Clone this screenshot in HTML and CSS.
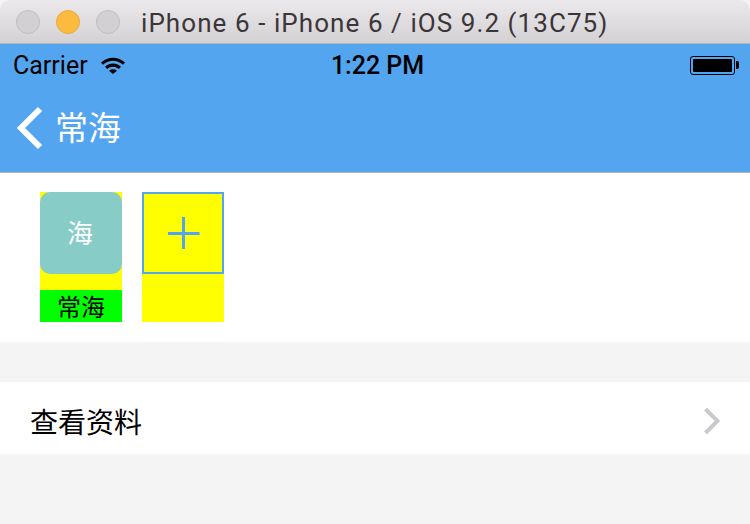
FILE: index.html
```html
<!DOCTYPE html>
<html lang="zh-CN">

<head>
    <meta charset="UTF-8">
    <title>iPhone 6 - iPhone 6 / iOS 9.2 (13C75)</title>
    <link rel="stylesheet" href="styles.css">
</head>

<body>
    <div class="titlebar">
        <div class="lights">
            <span class="light"></span>
            <span class="light light-min"></span>
            <span class="light"></span>
        </div>
        <span class="window-title">iPhone 6 - iPhone 6 / iOS 9.2 (13C75)</span>
    </div>

    <div class="header">
        <div class="status">
            <div class="status-left">
                <span>Carrier</span>
                <svg class="wifi" width="24" height="17" viewBox="0 0 24 17">
                    <path d="M0 5.500C7 -.8 17 -.8 24 5.500L22 7.700C16 2.500 8 2.500 2 7.700Z" fill="#000" />
                    <path d="M4 9.700C9 5.500 15 5.500 20 9.700L17.800 12C14 9 10 9 6.200 12Z" fill="#000" />
                    <path d="M8 13.700C10.500 11.800 13.500 11.800 16 13.700L12 17Z" fill="#000" />
                </svg>
            </div>
            <span class="clock">1:22 PM</span>
            <div class="status-right">
                <div class="battery"><span class="battery-fill"></span></div>
            </div>
        </div>
        <div class="nav">
            <svg class="back" width="28" height="44" viewBox="0 0 28 44">
                <path d="M24 3L5 22L24 41" fill="none" stroke="#fff" stroke-width="6" />
            </svg>
            <span class="nav-title">常海</span>
        </div>
    </div>

    <div class="members">
        <div class="member">
            <div class="avatar">海</div>
            <div class="member-name">常海</div>
        </div>
        <div class="member">
            <div class="add">
                <svg width="34" height="34" viewBox="0 0 34 34">
                    <path d="M2 17.500H33.500M17.500 1V33" fill="none" stroke="#53a5ef" stroke-width="3" />
                </svg>
            </div>
        </div>
    </div>

    <div class="row">
        <span>查看资料</span>
        <svg class="arrow" width="16" height="26" viewBox="0 0 16 26">
            <path d="M1.500 1L13.500 13L1.500 25" fill="none" stroke="#c8c8cd" stroke-width="4" />
        </svg>
    </div>
</body>

</html>
```

FILE: styles.css
```css
* {
    margin: 0;
    padding: 0;
    box-sizing: border-box;
}

body {
    height: 524px;
    overflow: hidden;
    background: #f4f4f4;
    font-family: 'Liberation Sans', 'Noto Sans CJK SC', sans-serif;
}

.titlebar {
    display: flex;
    align-items: center;
    height: 44px;
    padding-left: 16px;
    border-bottom: 1px solid #b4b2b4;
    border-radius: 10px 10px 0 0;
    background: linear-gradient(#ebe9eb, #d3d1d3);
}

.lights {
    display: flex;
    gap: 16px;
}

.light {
    width: 24px;
    height: 24px;
    border: 1px solid #c0bec0;
    border-radius: 50%;
    background: #d2d0d2;
}

.light-min {
    border-color: #e8a93a;
    background: #fcbb3f;
}

.window-title {
    margin-left: 21px;
    padding-top: 3px;
    font-family: Roboto, sans-serif;
    font-size: 26px;
    letter-spacing: 1.07px;
    color: #3c3538;
}

.header {
    height: 129px;
    border-bottom: 1px solid #b2b2b2;
    background: #53a5ef;
}

.status {
    display: flex;
    align-items: center;
    height: 40px;
    padding: 2px 15px 0 13px;
    color: #000;
}

.status-left {
    display: flex;
    flex: 1;
    align-items: center;
    gap: 13px;
    font-family: Roboto, sans-serif;
    font-size: 25px;
}

.status-right {
    display: flex;
    flex: 1;
    justify-content: flex-end;
}

.clock {
    margin-left: 7px;
    font-family: Roboto, sans-serif;
    font-size: 25px;
    font-weight: 500;
}

.battery {
    position: relative;
    width: 45px;
    height: 19px;
    padding: 2px;
    border: 1px solid #000;
    border-radius: 3px;
}

.battery::after {
    content: '';
    position: absolute;
    top: 4px;
    right: -5px;
    width: 3px;
    height: 8px;
    border-radius: 0 2px 2px 0;
    background: #000;
}

.battery-fill {
    display: block;
    height: 100%;
    border-radius: 1px;
    background: #000;
}

.nav {
    display: flex;
    align-items: center;
    gap: 11px;
    height: 88px;
    padding-left: 16px;
    color: #fff;
}

.nav-title {
    padding-bottom: 4px;
    font-size: 33px;
}

.members {
    display: flex;
    gap: 20px;
    height: 169px;
    padding: 19px 40px;
    background: #fff;
}

.member {
    display: flex;
    flex-direction: column;
    justify-content: space-between;
    width: 82px;
    height: 130px;
    background: #ff0;
}

.avatar {
    display: flex;
    align-items: center;
    justify-content: center;
    height: 82px;
    padding: 0 2px 4px 0;
    border-radius: 10px;
    background: #88ccc8;
    color: #fff;
    font-size: 26px;
}

.member-name {
    height: 32px;
    background: #0f0;
    color: #000;
    font-size: 24px;
    line-height: 35px;
    text-align: center;
}

.add {
    display: flex;
    align-items: center;
    justify-content: center;
    height: 82px;
    border: 2px solid #53a5ef;
}

.row {
    display: flex;
    align-items: center;
    justify-content: space-between;
    height: 72px;
    margin-top: 40px;
    padding: 6px 30px 0 30px;
    background: #fff;
    color: #000;
    font-size: 28px;
}
```
